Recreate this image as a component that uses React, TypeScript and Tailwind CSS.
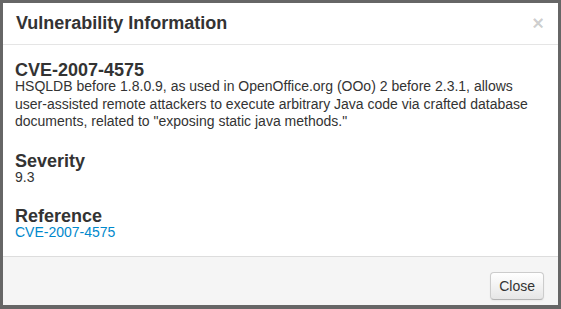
import React from 'react'

const sections = [
  {
    title: 'CVE-2007-4575',
    body: (
      <>
        HSQLDB before 1.8.0.9, as used in OpenOffice.org (OOo) 2 before 2.3.1, allows
        <br />
        user-assisted remote attackers to execute arbitrary Java code via crafted database
        <br />
        documents, related to "exposing static java methods."
      </>
    ),
  },
  { title: 'Severity', body: '9.3' },
  {
    title: 'Reference',
    body: (
      <a href="#" className="text-[#0088cc] no-underline">
        CVE-2007-4575
      </a>
    ),
  },
]

export default function App() {
  return (
    <div className="w-[561px] h-[309px] bg-[#666666] pt-[3px] px-[3px] font-['Liberation_Sans',Arial,sans-serif] text-[#333333]">
      {/* Modal */}
      <div className="h-[302px] bg-white flex flex-col">
        {/* Header */}
        <div className="h-[42px] border-b border-[#e5e5e5] pl-[13px] pr-[14px] pt-[10px] flex items-start justify-between">
          <h3 className="text-[18px] leading-[20px] font-bold">Vulnerability Information</h3>
          <button className="text-[20px] leading-[20px] font-bold text-black/20">×</button>
        </div>

        {/* Body */}
        <div className="flex-1 px-[12px] pt-[17px] flex flex-col gap-[22px]">
          {sections.map((s) => (
            <div key={s.title}>
              <h4 className="text-[18px] leading-[16px] font-bold">{s.title}</h4>
              <div className="text-[14px] leading-[17.5px]">{s.body}</div>
            </div>
          ))}
        </div>

        {/* Footer */}
        <div className="h-[49px] border-t border-[#dddddd] bg-[#f5f5f5] pt-[15px] pr-[14px] flex justify-end items-start">
          <button className="h-[28px] px-[8px] text-[14px] text-[#333333] rounded-[4px] border border-[#cccccc] border-b-[#b3b3b3] bg-gradient-to-b from-white to-[#e6e6e6] shadow-[inset_0_1px_0_rgba(255,255,255,0.2),0_1px_2px_rgba(0,0,0,0.05)]">
            Close
          </button>
        </div>
      </div>
    </div>
  )
}
